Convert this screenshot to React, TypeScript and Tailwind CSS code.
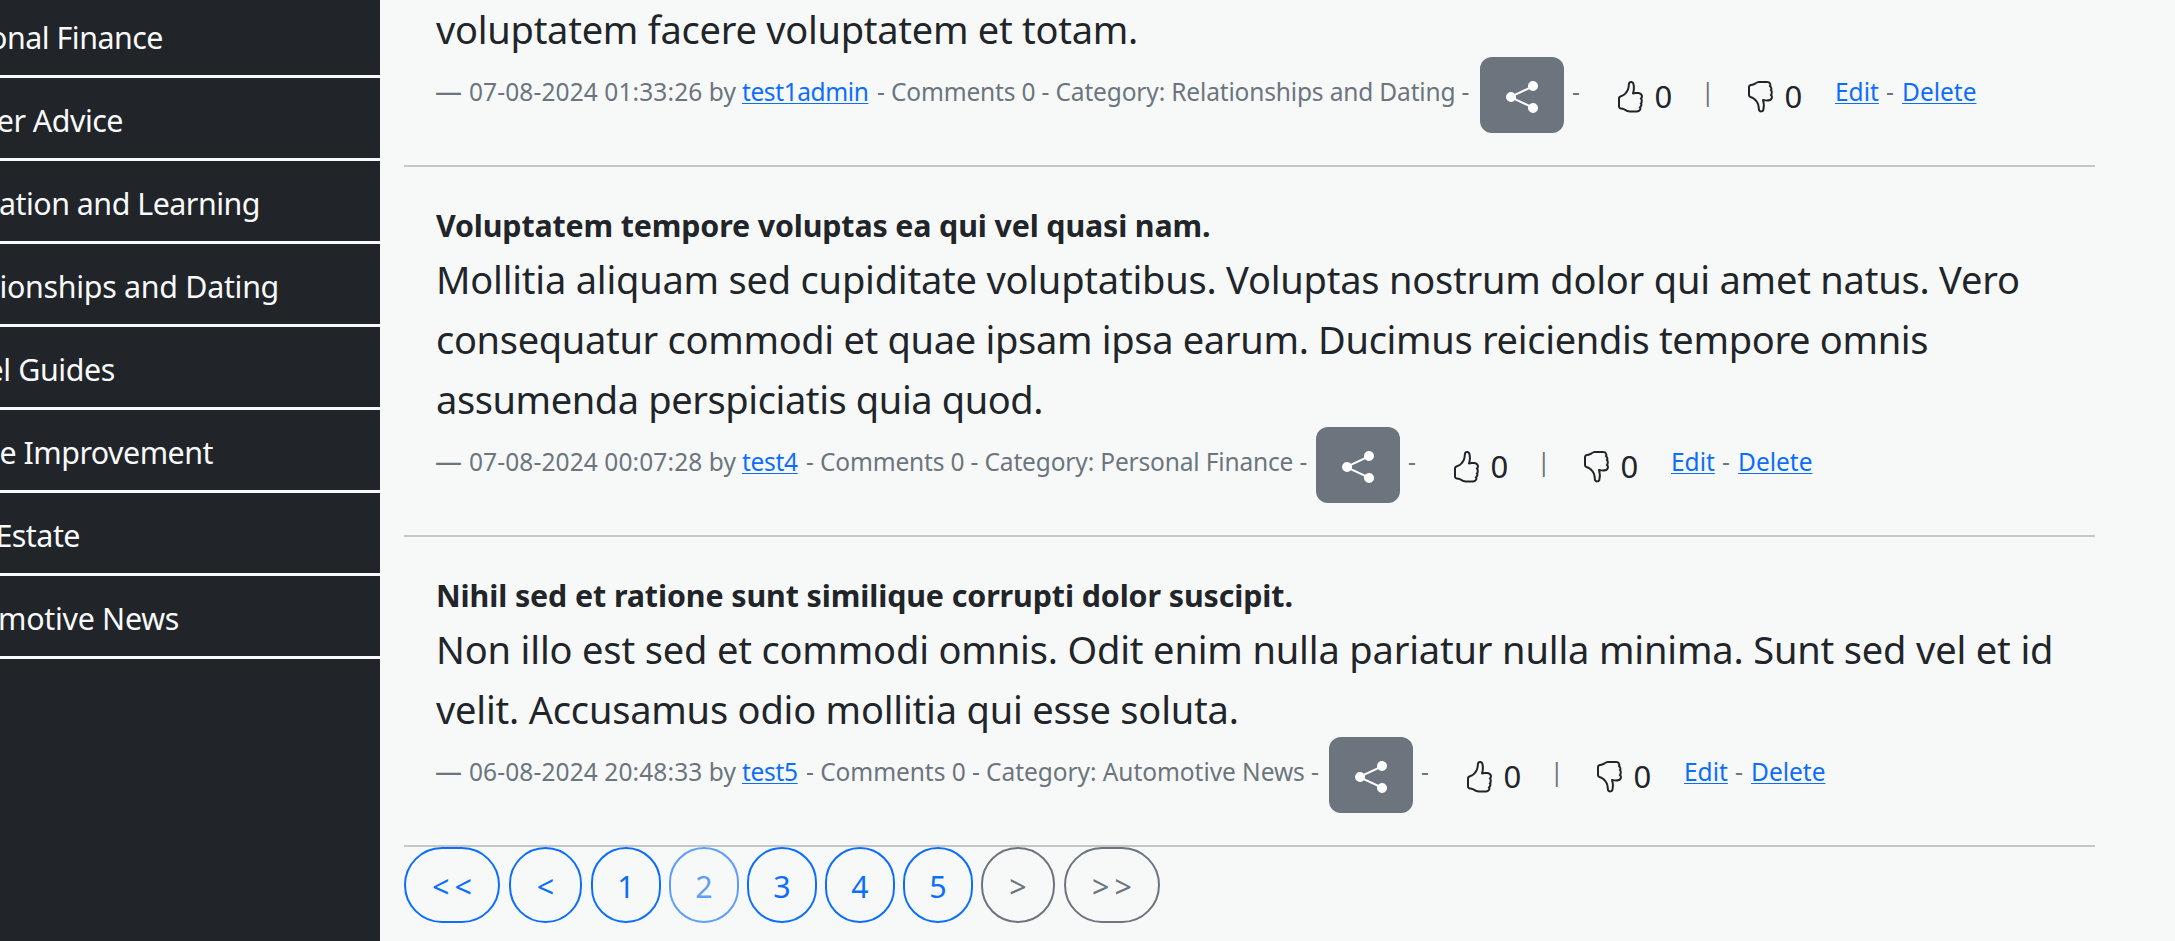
import type { ReactNode } from "react";
import { BsHandThumbsDown, BsHandThumbsUp, BsShareFill } from "react-icons/bs";

const categories = [
  { name: "Personal Finance", pad: "pr-[217px] tracking-[-0.5px]" },
  { name: "Career Advice", pad: "pr-[257px] tracking-[-0.5px]" },
  { name: "Education and Learning", pad: "pr-[120px] tracking-[-0.5px]" },
  { name: "Relationships and Dating", pad: "pr-[101px] tracking-[-0.3px]" },
  { name: "Travel Guides", pad: "pr-[265px] tracking-[-0.4px]" },
  { name: "Home Improvement", pad: "pr-[167px] tracking-[-0.5px]" },
  { name: "Real Estate", pad: "pr-[300px] tracking-[-0.5px]" },
  { name: "Automotive News", pad: "pr-[201px] tracking-[-0.3px]" },
];

type Line = { text: string; tracking: string };

type Post = {
  title?: Line;
  lines: Line[];
  date: string;
  author: string;
  authorClass: string;
  category: string;
  categoryClass: string;
};

const posts: Post[] = [
  {
    lines: [{ text: "voluptatem facere voluptatem et totam.", tracking: "tracking-[-0.26px]" }],
    date: "07-08-2024 01:33:26",
    author: "test1admin",
    authorClass: "w-[126px] tracking-[-0.4px]",
    category: "Relationships and Dating",
    categoryClass: "w-[612px] pl-[9px] tracking-[-0.16px]",
  },
  {
    title: { text: "Voluptatem tempore voluptas ea qui vel quasi nam.", tracking: "tracking-[-0.15px]" },
    lines: [
      { text: "Mollitia aliquam sed cupiditate voluptatibus. Voluptas nostrum dolor qui amet natus. Vero", tracking: "tracking-[-0.21px]" },
      { text: "consequatur commodi et quae ipsam ipsa earum. Ducimus reiciendis tempore omnis", tracking: "tracking-[-0.31px]" },
      { text: "assumenda perspiciatis quia quod.", tracking: "tracking-[-0.4px]" },
    ],
    date: "07-08-2024 00:07:28",
    author: "test4",
    authorClass: "w-[55px] tracking-[-0.3px]",
    category: "Personal Finance",
    categoryClass: "w-[519px] pl-[9px] tracking-[-0.16px]",
  },
  {
    title: { text: "Nihil sed et ratione sunt similique corrupti dolor suscipit.", tracking: "tracking-[-0.11px]" },
    lines: [
      { text: "Non illo est sed et commodi omnis. Odit enim nulla pariatur nulla minima. Sunt sed vel et id", tracking: "tracking-[-0.16px]" },
      { text: "velit. Accusamus odio mollitia qui esse soluta.", tracking: "tracking-[-0.2px]" },
    ],
    date: "06-08-2024 20:48:33",
    author: "test5",
    authorClass: "w-[55px] tracking-[-0.3px]",
    category: "Automotive News",
    categoryClass: "w-[532px] pl-[9px] tracking-[-0.06px]",
  },
];

const pages = [
  { label: "<<", style: "w-24 mr-[9px] tracking-[5px] pl-[5px] border-[#0d6efd] text-[#0d6efd]" },
  { label: "<", style: "w-[73px] mr-[9px] border-[#0d6efd] text-[#0d6efd]" },
  { label: "1", style: "w-[70px] mr-2 border-[#0d6efd] text-[#0d6efd]" },
  { label: "2", style: "w-[70px] mr-2 border-[#0d6efd] text-[#0d6efd] opacity-65" },
  { label: "3", style: "w-[70px] mr-2 border-[#0d6efd] text-[#0d6efd]" },
  { label: "4", style: "w-[70px] mr-2 border-[#0d6efd] text-[#0d6efd]" },
  { label: "5", style: "w-[70px] mr-2 border-[#0d6efd] text-[#0d6efd]" },
  { label: ">", style: "w-[74px] mr-[9px] border-[#6c757d] text-[#6c757d]" },
  { label: ">>", style: "w-24 tracking-[5px] pl-[5px] border-[#6c757d] text-[#6c757d]" },
];

function Link({ className, children }: { className: string; children: ReactNode }) {
  return (
    <a href="#" className={`shrink-0 ${className}`}>
      <span className="text-[#0d6efd] underline decoration-1 underline-offset-2">{children}</span>
    </a>
  );
}

function Vote({ icon, className }: { icon: ReactNode; className: string }) {
  return (
    <button className={`flex shrink-0 text-[31px] leading-[79px] text-[#212529] ${className}`}>
      <span className="mt-6 w-[40.5px] shrink-0">{icon}</span>0
    </button>
  );
}

function PostItem({ post }: { post: Post }) {
  return (
    <article className={`border-b-2 border-[#c5c7c7] pb-8 pl-8 ${post.title ? "pt-[34px]" : ""}`}>
      {post.title && (
        <h2 className={`h-12 text-[30.4px] leading-[50px] font-bold ${post.title.tracking}`}>{post.title.text}</h2>
      )}
      {post.lines.map((line) => (
        <p key={line.text} className={`text-[38px] leading-[60px] ${line.tracking}`}>
          {line.text}
        </p>
      ))}
      <footer className="-mt-[2px] flex h-[76px] items-start text-[24.5px] leading-[69px] text-[#6c757d]">
        <span className="-ml-px w-[34px] shrink-0 text-[27px] leading-[68px]">—</span>
        <span className="w-[273px] shrink-0 tracking-[0.1px]">{post.date} by</span>
        <Link className={post.authorClass}>{post.author}</Link>
        <span className={`shrink-0 ${post.categoryClass}`}>
          - Comments 0 - Category: {post.category} -
        </span>
        <button className="flex h-[76px] w-21 shrink-0 justify-center rounded-xl bg-[#6c757d] pt-6 text-white">
          <BsShareFill className="size-8" />
        </button>
        <span className="w-[50px] shrink-0 pl-2">-</span>
        <Vote className="w-[87px]" icon={<BsHandThumbsUp className="size-8" />} />
        <span className="w-[43px] shrink-0">|</span>
        <Vote className="w-[91px]" icon={<BsHandThumbsDown className="size-8" />} />
        <Link className="w-[51px]">Edit</Link>
        <span className="w-4 shrink-0">-</span>
        <Link className="w-20">Delete</Link>
      </footer>
    </article>
  );
}

export default function App() {
  return (
    <div className="flex h-[941px] w-[2175px] overflow-hidden bg-[#f7f9f9] font-['Noto_Sans','Open_Sans',sans-serif] text-[#212529]">
      <aside className="w-[380px] shrink-0 overflow-hidden bg-[#212529]">
        <ul className="-mt-[5px]">
          {categories.map((c) => (
            <li
              key={c.name}
              className={`flex h-[83px] justify-end border-b-3 border-[#f8f9fa] text-[30.4px] leading-[86px] whitespace-nowrap text-[#f8f9fa] ${c.pad}`}
            >
              {c.name}
            </li>
          ))}
        </ul>
      </aside>
      <main className="-mt-px ml-6 w-[1691px] shrink-0 whitespace-nowrap">
        {posts.map((post) => (
          <PostItem key={post.date} post={post} />
        ))}
        <nav className="flex">
          {pages.map((p) => (
            <button key={p.label} className={`h-[76px] shrink-0 rounded-full border-2 text-[30.4px] leading-[76px] ${p.style}`}>
              {p.label}
            </button>
          ))}
        </nav>
      </main>
    </div>
  );
}
